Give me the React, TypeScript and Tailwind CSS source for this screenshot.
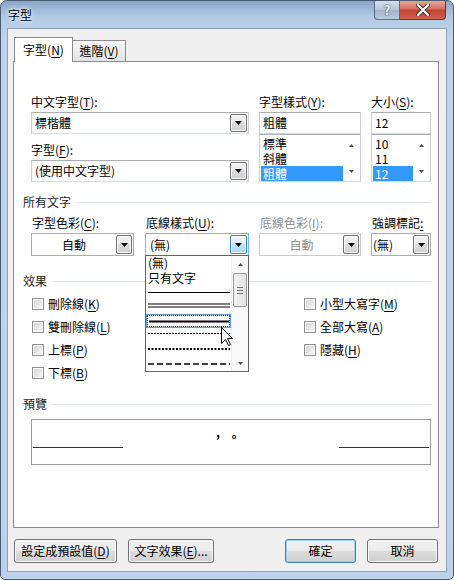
import React from "react";

const K = ({ k }: { k: string }) => (
  <span className="underline underline-offset-[2px] decoration-1">{k}</span>
);

function Tri({ w = 7, h = 4, color = "#000", up = false }: { w?: number; h?: number; color?: string; up?: boolean }) {
  return (
    <svg width={w} height={h} viewBox={`0 0 ${w} ${h}`}>
      <path d={up ? `M0 ${h}H${w}L${w / 2} 0z` : `M0 0H${w}L${w / 2} ${h}z`} fill={color} />
    </svg>
  );
}

function DropBtn({ cls, hot }: { cls: string; hot?: boolean }) {
  return (
    <div
      className={`flex shrink-0 items-center justify-center rounded-[2px] border shadow-[inset_0_0_0_1px_#fcfcfc] ${
        hot
          ? "border-[#3c7fb1] bg-[linear-gradient(#eaf6fd,#d9f0fc_50%,#bee6fd_50%,#a7d9f5)]"
          : "border-[#707070] bg-[linear-gradient(#f2f2f2,#ebebeb_50%,#dddddd_50%,#cfcfcf)]"
      } ${cls}`}
    >
      <Tri />
    </div>
  );
}

function EditCombo({ text }: { text: string }) {
  return (
    <div className="mt-[3px] flex h-[22px] items-center border border-[#abadb3] border-x-[#c9ced6] border-b-[#d5dbe3] bg-white">
      <span className="flex-1 pl-[3px]">{text}</span>
      <DropBtn cls="mr-px h-[18px] w-[17px]" />
    </div>
  );
}

function TextBox({ text }: { text: string }) {
  return (
    <div className="mt-[3px] flex h-[22px] items-center border border-[#abadb3] border-x-[#c9ced6] border-b-[#d5dbe3] bg-white pl-[3px]">
      {text}
    </div>
  );
}

function ListBox({ items, sel }: { items: string[]; sel: number }) {
  return (
    <div className="flex h-[48px] border border-[#abadb3] border-x-[#c9ced6] border-b-[#d5dbe3] bg-white">
      <div className="flex flex-1 flex-col pl-px pt-px">
        {items.map((t, i) => (
          <div
            key={t}
            className={`flex h-[15px] items-center pl-[2px] ${i === sel ? "bg-[#3399ff] text-white" : ""}`}
          >
            <span className="leading-[12px]">{t}</span>
          </div>
        ))}
      </div>
      <div className="flex w-[17px] flex-col items-center justify-between pb-[8px] pt-[9px]">
        <Tri w={5} h={3} color="#4a4a4a" up />
        <Tri w={5} h={3} color="#4a4a4a" />
      </div>
    </div>
  );
}

function Group({ title, cls }: { title: string; cls: string }) {
  return (
    <div className={`flex h-[14px] items-center pl-[9px] pr-[7px] ${cls}`}>
      <span className="text-[#1e1e1e]">{title}</span>
      <div className="ml-[6px] h-px flex-1 bg-[#dde3ea]" />
    </div>
  );
}

function Check({ children }: { children: React.ReactNode }) {
  return (
    <div className="flex h-[23px] items-center">
      <div className="h-[12px] w-[12px] border border-[#8f8f8f] bg-white p-px">
        <div className="h-full w-full bg-[linear-gradient(135deg,#d6d6d6,#f6f6f6)]" />
      </div>
      <span className="ml-[4px]">{children}</span>
    </div>
  );
}

function LineItem({ h, y, dash, sw, color = "#000" }: { h: number; y: number; dash?: string; sw: number; color?: string }) {
  return (
    <svg width="82" height={h} className="ml-[2px] block">
      <line x1="0" y1={y} x2="82" y2={y} stroke={color} strokeWidth={sw} strokeDasharray={dash} />
    </svg>
  );
}

function Btn({ cls, children, def }: { cls: string; children: React.ReactNode; def?: boolean }) {
  return (
    <div
      className={`flex h-[24px] items-center justify-center rounded-[3px] border bg-[linear-gradient(#f2f2f2,#ebebeb_50%,#dddddd_50%,#cfcfcf)] ${
        def ? "border-[#3c7fb1] shadow-[inset_0_0_0_1px_#9fd3f2]" : "border-[#707070] shadow-[inset_0_0_0_1px_#fbfbfb]"
      } ${cls}`}
    >
      {children}
    </div>
  );
}

export default function App() {
  return (
    <div className="h-[580px] w-[454px] bg-white font-[family-name:'Noto_Sans_CJK_TC',sans-serif] text-[12px] leading-[14px] text-black">
      <div className="flex h-[580px] w-[454px] flex-col overflow-hidden rounded-t-[7px] rounded-b-[5px] border border-[#4b5c72] bg-[linear-gradient(180deg,#8aa6c6_0px,#b2cae5_16px,#c0d5ec_40px,#bcd2ea_100%)]">
        {/* title bar */}
        <div className="flex h-[27px] shrink-0 items-start justify-between">
          <div className="ml-[7px] flex h-[27px] items-center [text-shadow:0_0_6px_#ffffff,0_0_3px_#ffffff]">字型</div>
          <div className="mr-[7px] flex">
            <div className="flex h-[19px] w-[26px] items-center justify-center rounded-bl-[4px] border border-t-0 border-[#5a6b82] bg-[linear-gradient(#d5e0ec,#b4c5d8_50%,#a2b6cc_50%,#b8cade)] text-[13px] font-bold text-white [text-shadow:0_0_2px_#334455,0_0_1px_#334455]">
              ?
            </div>
            <div className="flex h-[19px] w-[46px] items-center justify-center rounded-br-[4px] border border-l-0 border-t-0 border-[#5a3a36] bg-[linear-gradient(#e8a497,#d4705f_45%,#c14331_50%,#d0624c)]">
              <svg width="14" height="12" viewBox="0 0 14 12">
                <path d="M2 1l10 10M12 1L2 11" stroke="#3a2624" strokeWidth="4" strokeLinecap="round" />
                <path d="M2 1l10 10M12 1L2 11" stroke="#fff" strokeWidth="2.4" strokeLinecap="round" />
              </svg>
            </div>
          </div>
        </div>

        {/* client area */}
        <div className="mx-[6px] flex h-[544px] shrink-0 flex-col border border-[#8d9fb5] bg-[#f0f0f0]">
          {/* tabs */}
          <div className="relative z-10 ml-[6px] mt-[8px] flex h-[24px] items-end">
            <div className="-mb-px flex h-[25px] w-[59px] items-center justify-center border border-b-0 border-[#898c95] bg-white">
              字型(<K k="N" />)
            </div>
            <div className="flex h-[21px] w-[53px] items-center justify-center border border-b-0 border-l-0 border-[#898c95] bg-[linear-gradient(#f6f6f6,#e3e3e3)] shadow-[inset_0_1px_0_#ffffff]">
              進階(<K k="V" />)
            </div>
          </div>

          {/* tab pane */}
          <div className="ml-[5px] flex h-[467px] w-[426px] shrink-0 flex-col border border-[#898c95] bg-white">
            {/* fonts */}
            <div className="ml-[17px] mt-[33px] flex">
              <div className="flex w-[218px] flex-col">
                <div className="h-[14px]">
                  中文字型(<K k="T" />):
                </div>
                <EditCombo text="標楷體" />
                <div className="mt-[9px] h-[14px]">
                  字型(<K k="F" />):
                </div>
                <EditCombo text="(使用中文字型)" />
              </div>
              <div className="ml-[10px] flex w-[102px] flex-col">
                <div className="h-[14px]">
                  字型樣式(<K k="Y" />):
                </div>
                <TextBox text="粗體" />
                <ListBox items={["標準", "斜體", "粗體"]} sel={2} />
              </div>
              <div className="ml-[10px] flex w-[60px] flex-col">
                <div className="h-[14px]">
                  大小(<K k="S" />):
                </div>
                <TextBox text="12" />
                <ListBox items={["10", "11", "12"]} sel={2} />
              </div>
            </div>

            <Group title="所有文字" cls="mt-[13px]" />

            {/* colour / underline */}
            <div className="relative z-20 ml-[17px] mt-[7px] flex">
              <div className="flex w-[103px] flex-col">
                <div className="h-[14px] pl-px">
                  字型色彩(<K k="C" />):
                </div>
                <div className="mt-[3px] flex h-[23px] items-center border border-[#abadb3] bg-white">
                  <span className="flex-1 text-center">自動</span>
                  <DropBtn cls="mr-px h-[19px] w-[16px]" />
                </div>
              </div>
              <div className="relative ml-[11px] flex w-[104px] flex-col">
                <div className="h-[14px] pl-px">
                  底線樣式(<K k="U" />):
                </div>
                <div className="mt-[3px] flex h-[23px] items-center border border-[#7eb4ea] border-l-[#abadb3] bg-white">
                  <span className="flex-1 pl-[4px]">(無)</span>
                  <DropBtn hot cls="mr-px h-[19px] w-[17px]" />
                </div>

                {/* open underline list */}
                <div className="absolute left-0 top-[39px] flex h-[117px] w-[104px] border border-[#646464] bg-white">
                  <div className="relative flex w-[85px] flex-col">
                    <div className="h-[14px] pl-[2px] leading-[13px]">(無)</div>
                    <div className="h-[15px] pl-[2px] leading-[16px]">只有文字</div>
                    <LineItem h={15} y={7.5} sw={1} />
                    <svg width="82" height="14" className="ml-[2px] block">
                      <line x1="0" y1="4" x2="82" y2="4" stroke="#555" strokeWidth="1.5" />
                      <line x1="0" y1="7" x2="82" y2="7" stroke="#555" strokeWidth="1.5" />
                    </svg>
                    <div className="h-[15px] border border-[#5b9be0] p-0">
                      <div className="h-full border border-dotted border-[#333] pt-[4px]">
                        <svg width="80" height="3" className="ml-px block">
                          <line x1="0" y1="1.5" x2="80" y2="1.5" stroke="#000" strokeWidth="2" />
                        </svg>
                      </div>
                    </div>
                    <LineItem h={14} y={5.5} sw={1} dash="2 1" />
                    <LineItem h={15} y={7} sw={2} dash="2 1.5" />
                    <LineItem h={14} y={7} sw={1.5} dash="6 3" />
                    <svg width="13" height="19" viewBox="0 0 13 19" className="absolute left-[75px] top-[71px]">
                      <path d="M0.5 0.5V16.5L4.5 12.5L7.5 18.5L9.5 17.5L6.5 11.5H11.5Z" fill="#fff" stroke="#000" strokeWidth="1" />
                    </svg>
                  </div>
                  <div className="flex w-[17px] flex-col items-center border-l border-[#ececec] bg-[#fafafa]">
                    <div className="flex h-[17px] items-center justify-center">
                      <Tri w={5} h={3} color="#4a4a4a" up />
                    </div>
                    <div className="flex h-[34px] w-[14px] flex-col items-center justify-center gap-[2px] rounded-[2px] border border-[#979797] bg-[linear-gradient(90deg,#f3f3f3,#e2e2e2)]">
                      <div className="h-px w-[6px] bg-[#6d6d6d]" />
                      <div className="h-px w-[6px] bg-[#6d6d6d]" />
                      <div className="h-px w-[6px] bg-[#6d6d6d]" />
                    </div>
                    <div className="flex-1" />
                    <div className="flex h-[15px] items-center justify-center">
                      <Tri w={5} h={3} color="#4a4a4a" />
                    </div>
                  </div>
                </div>
              </div>
              <div className="ml-[10px] flex w-[102px] flex-col">
                <div className="h-[14px] pl-px text-[#8d8d8d]">
                  底線色彩(<K k="I" />):
                </div>
                <div className="mt-[3px] flex h-[23px] items-center border border-[#c7c9cd] bg-white">
                  <span className="flex-1 text-center text-[#8d8d8d]">自動</span>
                  <DropBtn cls="mr-px h-[19px] w-[16px]" />
                </div>
              </div>
              <div className="ml-[10px] flex w-[60px] flex-col">
                <div className="h-[14px] pl-px">
                  強調標記<K k=":" />
                </div>
                <div className="mt-[3px] flex h-[23px] items-center border border-[#abadb3] bg-white">
                  <span className="flex-1 pl-px">(無)</span>
                  <DropBtn cls="mr-px h-[19px] w-[16px]" />
                </div>
              </div>
            </div>

            <Group title="效果" cls="mt-[18px]" />

            <div className="ml-[18px] mt-[4px] flex">
              <div className="flex w-[272px] flex-col">
                <Check>
                  刪除線(<K k="K" />)
                </Check>
                <Check>
                  雙刪除線(<K k="L" />)
                </Check>
                <Check>
                  上標(<K k="P" />)
                </Check>
                <Check>
                  下標(<K k="B" />)
                </Check>
              </div>
              <div className="flex flex-col">
                <Check>
                  小型大寫字(<K k="M" />)
                </Check>
                <Check>
                  全部大寫(<K k="A" />)
                </Check>
                <Check>
                  隱藏(<K k="H" />)
                </Check>
              </div>
            </div>

            <Group title="預覽" cls="mt-[13px]" />

            <div className="ml-[17px] mt-[8px] flex h-[46px] w-[400px] border border-[#9c9c9c]">
              <div className="ml-px mt-[27px] h-px w-[90px] bg-[#333]" />
              <div className="mt-[10px] flex-1 pr-[6px] text-center font-bold tracking-[4px]">，。</div>
              <div className="mr-px mt-[27px] h-px w-[90px] bg-[#333]" />
            </div>
          </div>

          {/* buttons */}
          <div className="mt-[11px] flex">
            <Btn cls="ml-[6px] w-[103px]">
              設定成預設值(<K k="D" />)
            </Btn>
            <Btn cls="ml-[11px] w-[86px]">
              文字效果(<K k="E" />)...
            </Btn>
            <Btn def cls="ml-[71px] w-[71px]">
              確定
            </Btn>
            <Btn cls="ml-[11px] w-[71px]">取消</Btn>
          </div>
        </div>
      </div>
    </div>
  );
}
